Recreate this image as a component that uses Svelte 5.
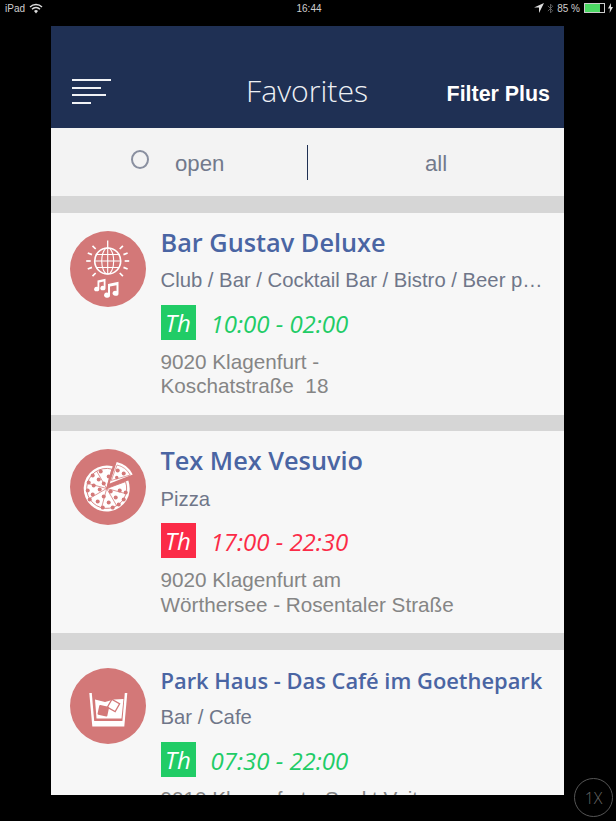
<script>
  const places = [
    {
      name: 'Bar Gustav Deluxe',
      kind: 'disco',
      tags: 'Club / Bar / Cocktail Bar / Bistro / Beer pub',
      state: 'green',
      hours: '10:00 - 02:00',
      address: ['9020 Klagenfurt -', 'Koschatstraße  18']
    },
    {
      name: 'Tex Mex Vesuvio',
      kind: 'pizza',
      tags: 'Pizza',
      state: 'red',
      hours: '17:00 - 22:30',
      address: ['9020 Klagenfurt am', 'Wörthersee - Rosentaler Straße']
    },
    {
      name: 'Park Haus - Das Café im Goethepark',
      kind: 'glass',
      tags: 'Bar / Cafe',
      state: 'green',
      hours: '07:30 - 22:00',
      address: ['9010 Klagenfurt - Sankt Veiter'],
      small: true
    }
  ]

  const rays = [45, 68, 90, 112, 135, 225, 248, 270, 292, 315]
  const cuts = [60, 105, 150, 195, 240, 285, 330]
  const pepperoni = [
    [-6, -17], [-14, -13], [2, -12], [-8, -9], [-18, -6], [-3, -5], [-13, -3],
    [-19, 2], [-7, 1], [4, 3], [13, 2], [19, 4], [-14, 6], [-3, 8], [9, 9],
    [17, 11], [-17, 11], [-9, 13], [2, 14], [12, 16], [-4, 19], [6, 19]
  ]
</script>

<div class="screen">
  <div class="status">
    <div class="status-left">
      <span>iPad</span>
      <svg width="14" height="11" viewBox="0 0 14 11">
        <path d="M1 4a8.5 8.5 0 0 1 12 0M3 6.2a5.4 5.4 0 0 1 8 0" fill="none" stroke="#ddd" stroke-width="1.4" />
        <path d="M5 8a3 3 0 0 1 4 0l-2 2.4z" fill="#ddd" />
      </svg>
    </div>
    <span class="clock">16:44</span>
    <div class="status-right">
      <svg width="10" height="10" viewBox="0 0 10 10"><path d="M10 0 0 4.6h5V10z" fill="#ddd" /></svg>
      <svg width="7" height="13" viewBox="0 0 8 13">
        <path d="M1 3.5 6.500 9 4 11.500v-10L6.500 4 1 9.500" fill="none" stroke="#666" stroke-width="1" />
      </svg>
      <span class="pct">85 %</span>
      <span class="battery"><span class="charge"></span></span>
      <svg width="5" height="10" viewBox="0 0 5 10"><path d="M3 0 0 5.600h2L1.600 10 5 4H3z" fill="#ddd" /></svg>
    </div>
  </div>

  <main class="app">
    <header class="nav">
      <div class="burger">
        <i style="width:39px"></i>
        <i style="width:29px"></i>
        <i style="width:34px"></i>
        <i style="width:19px"></i>
      </div>
      <h1>Favorites</h1>
      <button class="filter-plus">Filter Plus</button>
    </header>

    <div class="filter">
      <div class="seg seg-open">
        <span class="radio"></span>
        <span class="label">open</span>
      </div>
      <div class="seg seg-all"><span class="label">all</span></div>
    </div>

    {#each places as p}
      <div class="gap"></div>
      <article class="card">
        <div class="avatar">
          {#if p.kind === 'disco'}
            <svg width="76" height="76" viewBox="0 0 76 76" fill="none" stroke="#fff">
              <path d="M37.700 9.500v8" stroke-width="1.300" />
              <circle cx="37.700" cy="30" r="13" stroke-width="1.600" />
              <ellipse cx="37.700" cy="30" rx="6" ry="13" stroke-width="1.100" />
              <path d="M37.700 17v26M24.700 30h26M26.500 23.500h22.400M26.500 36.500h22.400" stroke-width="1.100" />
              {#each rays as r}
                <path d="M37.700 13v-4.500" stroke-width="1.700" transform="rotate({r} 37.700 30)" />
              {/each}
              <g fill="#fff" stroke="none">
                <path d="M27.500 49.500l8-1.800v9.300a2.600 2.200 0 1 1-1.800-2v-4.600l-4.400 1v6.600a2.600 2.200 0 1 1-1.800-2z" />
                <path d="M38 53l10.500-2.300v11.500a3 2.500 0 1 1-2-2.200v-5.800l-6.500 1.400v8.400a3 2.500 0 1 1-2-2.200z" />
              </g>
            </svg>
          {:else if p.kind === 'pizza'}
            <svg width="76" height="76" viewBox="0 0 76 76">
              <g transform="translate(36.700 39.500)">
                <path d="M0 0 5.950-22.200A23 23 0 1 0 21.600-7.900Z" fill="#fff" />
                <path d="M0 0 5.200-19.400A20 20 0 1 0 18.800-6.900Z" fill="none" stroke="#d37878" stroke-width="0.900" />
                {#each cuts as a}
                  <path d="M0 0V-20" stroke="#d37878" stroke-width="0.700" transform="rotate({a + 45} 0 0)" />
                {/each}
                {#each pepperoni as d}
                  <circle cx={d[0]} cy={d[1]} r="2" fill="#d37878" />
                {/each}
                <path d="M3-5 10-26.500A23 23 0 0 1 26-14Z" fill="#fff" />
                <path d="M4.500-8 10.300-23.500A20 20 0 0 1 23.500-13.500Z" fill="none" stroke="#d37878" stroke-width="0.700" />
                <circle cx="11" cy="-18" r="2" fill="#d37878" />
                <circle cx="17" cy="-15" r="2" fill="#d37878" />
                <circle cx="10" cy="-11" r="1.700" fill="#d37878" />
              </g>
            </svg>
          {:else}
            <svg width="76" height="76" viewBox="0 0 76 76">
              <path d="M19.300 25h38l-3 33.500h-32z" fill="#fff" />
              <path d="M21.800 25h33l-2.400 28H24.200z" fill="#d37878" />
              <path d="M25 31.500l10 2.500 9-2.500 9.500-.5-2 19.500H26.500z" fill="#fff" />
              <rect x="28.300" y="37.700" width="10" height="10" rx="1" fill="#d37878" transform="rotate(12 33.300 42.700)" />
              <rect x="39" y="33" width="9" height="9" fill="none" stroke="#d37878" stroke-width="1.300" transform="rotate(30 43.500 37.500)" />
            </svg>
          {/if}
        </div>
        <div class="info">
          <h2 class:small={p.small}>{p.name}</h2>
          <p class="tags">{p.tags}</p>
          <div class="hours {p.state}">
            <span class="day">Th</span>
            <span class="time">{p.hours}</span>
          </div>
          <p class="address">
            {#each p.address as line}
              <span>{line}</span>
            {/each}
          </p>
        </div>
      </article>
    {/each}
  </main>

  <div class="zoom-btn">1X</div>
</div>

<style>
  :global(body) {
    background: #000;
  }

  .screen {
    position: relative;
    width: 616px;
    height: 821px;
    overflow: hidden;
    background: #000;
    font-family: 'Liberation Sans', Arial, sans-serif;
  }

  .status {
    height: 16px;
    padding: 0 3px 10px 5px;
    display: flex;
    align-items: center;
    justify-content: space-between;
    color: #cfcfcf;
    font-size: 10px;
  }

  .status-left,
  .status-right {
    width: 170px;
    display: flex;
    align-items: center;
    gap: 4px;
  }

  .status-right {
    justify-content: flex-end;
    gap: 3px;
  }

  .pct {
    margin-right: 1px;
  }

  .battery {
    width: 19px;
    height: 8px;
    border: 1px solid #ccc;
    display: block;
  }

  .charge {
    display: block;
    width: 15px;
    height: 8px;
    background: #4cd964;
  }

  .app {
    width: 513px;
    height: 769px;
    margin-left: 51px;
    overflow: hidden;
    background: #d6d6d6;
  }

  .nav {
    height: 102px;
    box-sizing: border-box;
    padding: 53px 14px 0 21px;
    background: #1f3054;
    display: flex;
    align-items: flex-start;
    color: #fff;
  }

  .burger {
    width: 39px;
    display: flex;
    flex-direction: column;
    gap: 5.500px;
  }

  .burger i {
    display: block;
    height: 2px;
    background: #f0f2f6;
  }

  .nav h1 {
    margin: -8px 0 0 135px;
    font: 300 30.200px 'Open Sans', sans-serif;
    line-height: 40px;
    color: #eef0f4;
  }

  .filter-plus {
    margin: 2px 0 0 auto;
    padding: 0;
    border: 0;
    background: none;
    color: #fff;
    font: bold 21.400px 'Liberation Sans', Arial, sans-serif;
    line-height: 26px;
  }

  .filter {
    height: 68px;
    background: #f3f3f3;
    display: flex;
    align-items: center;
    color: #727a8c;
    font-size: 22.200px;
  }

  .label {
    margin-top: 4px;
  }

  .seg {
    height: 35px;
    flex: 1;
    display: flex;
    align-items: center;
  }

  .seg-open {
    box-sizing: border-box;
    flex: 0 0 257px;
    padding-left: 80px;
    gap: 26px;
    border-right: 1px solid #1f3054;
  }

  .seg-all {
    padding-left: 117px;
  }

  .radio {
    width: 14px;
    height: 15px;
    margin-top: -5px;
    border: 2px solid #8a90a0;
    border-radius: 50%;
  }

  .gap {
    height: 16.500px;
  }

  .card {
    height: 202px;
    box-sizing: border-box;
    padding: 18px 0 0 19px;
    background: #f7f7f7;
    display: flex;
    gap: 14px;
  }

  .avatar {
    width: 76px;
    height: 76px;
    flex: none;
    border-radius: 50%;
    background: #d37878;
  }

  .info {
    min-width: 0;
    width: 387px;
    margin-left: 0.500px;
    flex: none;
  }

  h2 {
    margin: -2px 0 0;
    font: 600 25.300px 'Open Sans', sans-serif;
    line-height: 27px;
    color: #4a65a3;
    white-space: nowrap;
  }

  h2.small {
    font-size: 21.900px;
    padding-top: 1px;
    height: 26px;
  }

  .tags {
    width: 383px;
    margin: 12.500px 0 0;
    font-size: 20.300px;
    line-height: 24px;
    color: #6f7689;
    white-space: nowrap;
    overflow: hidden;
    text-overflow: ellipsis;
  }

  .hours {
    margin-top: 12.500px;
    display: flex;
    align-items: center;
    gap: 15px;
    font: italic 24px 'Open Sans', sans-serif;
  }

  .day {
    width: 35px;
    height: 35px;
    display: flex;
    align-items: center;
    justify-content: center;
    color: #fff;
  }

  .time {
    margin-top: 2px;
  }

  .green .day {
    background: #21cc66;
  }

  .red .day {
    background: #fb2b47;
  }

  .green .time {
    color: #21cc66;
  }

  .red .time {
    color: #fb2b47;
  }

  .address {
    margin: 10px 0 0;
    font-size: 20.700px;
    line-height: 24.500px;
    color: #858585;
  }

  .address span {
    display: block;
    white-space: pre;
  }

  .zoom-btn {
    position: absolute;
    left: 574px;
    top: 778px;
    width: 37px;
    height: 37px;
    border: 1px solid #555;
    border-radius: 50%;
    display: flex;
    align-items: center;
    justify-content: center;
    color: #666;
    font: 300 16px 'Open Sans', sans-serif;
  }
</style>
